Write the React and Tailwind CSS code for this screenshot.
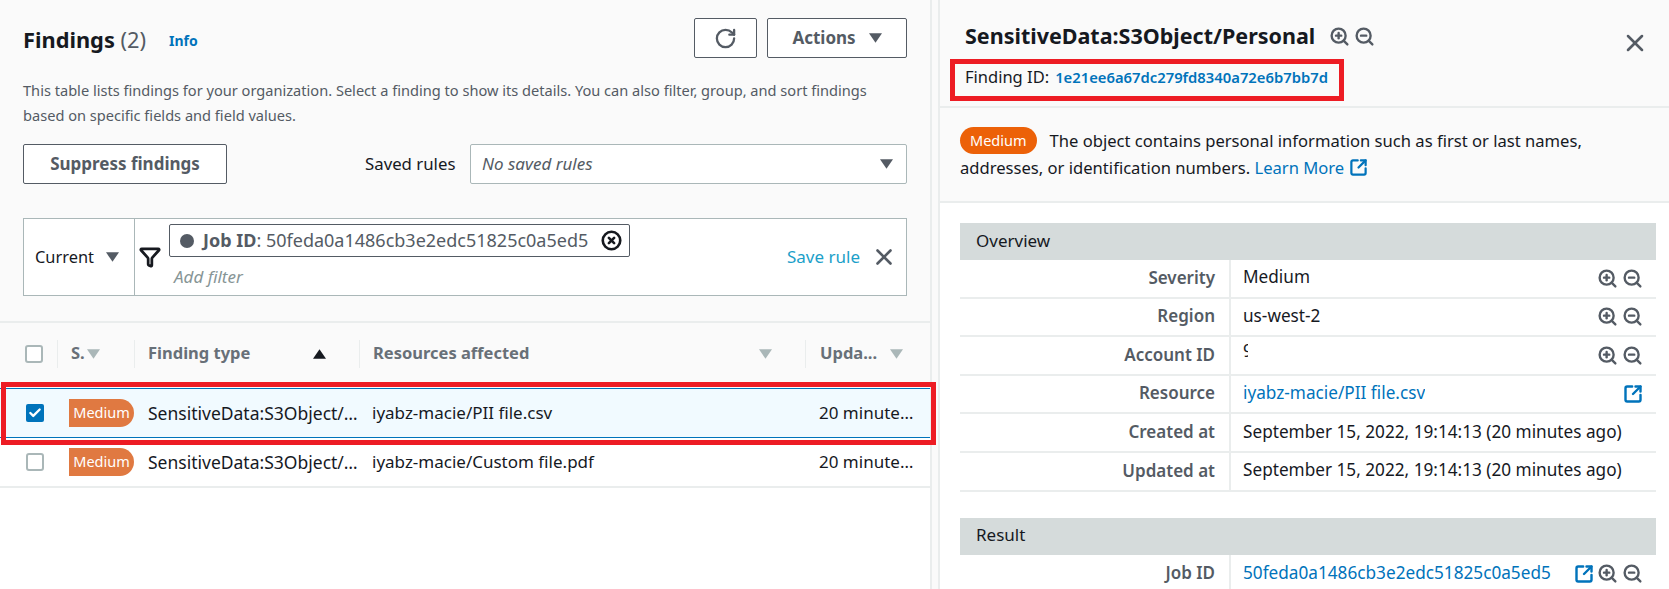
import { RotateCw, Funnel, CircleX, X, ZoomIn, ZoomOut, SquareArrowOutUpRight, Check } from "lucide-react";

const font = { fontFamily: '"Noto Sans", sans-serif' };

const Caret = ({ className }) => (
  <svg viewBox="0 0 14 10" className={className} fill="currentColor">
    <path d="M0 0h14L7 10z" />
  </svg>
);

const Zooms = () => (
  <div className="flex items-center gap-[4px] text-[#545b64]">
    <ZoomIn size={21} strokeWidth={2.7} />
    <ZoomOut size={21} strokeWidth={2.7} />
  </div>
);

const Ext = ({ size = 20 }) => (
  <SquareArrowOutUpRight size={size} strokeWidth={2.9} className="text-[#0073bb]" />
);

const Badge = ({ className }) => (
  <span className={`flex h-7 w-[65px] items-center justify-center rounded-r-full bg-[#e07941] text-[14.5px] text-white ${className}`}>
    Medium
  </span>
);

const TableRow = ({ selected, file, className }) => (
  <div className={`grid h-[50px] grid-cols-[69px_79px_224px_447px_113px] items-center text-[17px] text-[#16191f] ${className}`}>
    <div className="pl-[26px]">
      {selected ? (
        <span className="flex h-[18px] w-[18px] items-center justify-center rounded-[2px] bg-[#0073bb] text-white">
          <Check size={14} strokeWidth={4} />
        </span>
      ) : (
        <span className="block h-[18px] w-[18px] rounded-[3px] border-2 border-[#aab7b8] bg-white" />
      )}
    </div>
    <Badge />
    <div className="mr-[10px] truncate text-[17.5px]">SensitiveData:S3Object/Personal</div>
    <div className="truncate">{file}</div>
    <div className="mr-[14px] truncate">20 minutes ago</div>
  </div>
);

const DetailRow = ({ label, children, icons, border = true }) => (
  <div className={`flex h-[38.6px] items-stretch ${border ? "border-b-2 border-[#eaeded]" : ""}`}>
    <div className="flex w-[271px] shrink-0 items-center justify-end border-r-2 border-[#eaeded] pb-[2px] pr-[14px] text-[17px] font-semibold text-[#545b64]">
      {label}
    </div>
    <div className="flex min-w-0 flex-1 items-center justify-between pl-[12px] pr-[13px] text-[17.2px] text-[#16191f]">
      <div className="truncate pb-[2px]">{children}</div>
      <div className="flex items-center gap-[3px]">{icons}</div>
    </div>
  </div>
);

export default function App() {
  return (
    <div style={font} className="relative flex h-[589px] w-[1669px] overflow-hidden bg-white">
      {/* findings list */}
      <div className="w-[932px] shrink-0 border-r-2 border-[#eaeded]">
        <div className="h-[323px] border-b-2 border-[#eaeded] bg-[#fafafa] px-[23px]">
          <div className="flex h-[78px] items-start justify-between pt-[18px]">
            <div className="flex items-center pt-[4px]">
              <h1 className="text-[21.8px] leading-[36px] font-bold text-[#16191f]">
                Findings <span className="font-normal text-[#545b64]">(2)</span>
              </h1>
              <span className="ml-[23px] text-[14px] font-bold text-[#0073bb]">Info</span>
            </div>
            <div className="flex gap-[10px]">
              <button className="flex h-10 w-[63px] items-center justify-center rounded-[2px] border border-[#545b64] bg-white text-[#545b64]">
                <RotateCw size={23} strokeWidth={2.4} />
              </button>
              <button className="flex h-10 w-[140px] items-center justify-center gap-[13px] rounded-[2px] border border-[#545b64] bg-white text-[17px] font-bold text-[#545b64]">
                Actions
                <Caret className="h-[10px] w-[13px]" />
              </button>
            </div>
          </div>
          <p className="text-[14.6px] leading-[25px] text-[#545b64]">
            This table lists findings for your organization. Select a finding to show its details. You can also filter, group, and sort findings
            <br />
            based on specific fields and field values.
          </p>
          <div className="mt-[16px] flex h-10 items-center">
            <button className="h-10 w-[204px] rounded-[2px] border border-[#545b64] bg-white text-[17px] font-bold text-[#545b64]">
              Suppress findings
            </button>
            <span className="ml-[138px] w-[105px] text-[16.8px] text-[#16191f]">Saved rules</span>
            <div className="flex h-10 flex-1 items-center justify-between rounded-[2px] border border-[#aab7b8] bg-white pl-[11px] pr-[13px] text-[17px] text-[#545b64] italic">
              No saved rules
              <Caret className="h-[10px] w-[13px]" />
            </div>
          </div>
          <div className="mt-[34px] flex h-[78px] border border-[#aab7b8] bg-white">
            <div className="flex w-[111px] items-center gap-[12px] border-r border-[#aab7b8] pl-[11px] text-[16.4px] text-[#16191f]">
              Current
              <Caret className="h-[10px] w-[13px] text-[#545b64]" />
            </div>
            <div className="flex w-[30px] items-center justify-center text-[#16191f]">
              <Funnel size={22} strokeWidth={3} />
            </div>
            <div className="flex-1 pl-[4px] pt-[5px]">
              <div className="flex h-[33px] w-[461px] items-center rounded-[2px] border border-[#545b64] pl-[10px] text-[18px] text-[#545b64]">
                <span className="mr-[9px] h-[14px] w-[14px] rounded-full bg-[#545b64]" />
                <span className="font-bold">Job ID</span>: 50feda0a1486cb3e2edc51825c0a5ed5
                <CircleX size={21} strokeWidth={3} className="ml-auto mr-[7px] text-[#16191f]" />
              </div>
              <div className="mt-[9px] pl-[5px] text-[17px] leading-[22px] text-[#879596] italic">Add filter</div>
            </div>
            <div className="flex items-center gap-[11px] pr-[9px] text-[17px] text-[#1ba0c9]">
              Save rule
              <X size={26} strokeWidth={2.4} className="text-[#545b64]" />
            </div>
          </div>
        </div>

        <div className="grid h-[65px] grid-cols-[57px_77px_225px_446px_127px] items-center bg-[#fafafa] pb-[4px] text-[16.5px] font-bold text-[#687078]">
          <div className="pl-[25px]">
            <span className="block h-[18px] w-[18px] rounded-[3px] border-2 border-[#aab7b8] bg-white" />
          </div>
          <div className="flex h-7 items-center gap-[2px] border-l border-[#eaeded] pl-[13px]">
            S.
            <Caret className="h-[10px] w-[13px] text-[#aab7b8]" />
          </div>
          <div className="flex h-7 items-center justify-between border-l border-[#eaeded] pl-[13px] pr-[33px]">
            Finding type
            <Caret className="h-[10px] w-[13px] rotate-180 text-[#16191f]" />
          </div>
          <div className="flex h-7 items-center justify-between border-l border-[#eaeded] pl-[13px] pr-[33px]">
            Resources affected
            <Caret className="h-[10px] w-[13px] text-[#aab7b8]" />
          </div>
          <div className="flex h-7 items-center gap-[13px] border-l border-[#eaeded] pl-[14px]">
            Upda...
            <Caret className="h-[10px] w-[13px] text-[#aab7b8]" />
          </div>
        </div>
        <TableRow selected file="iyabz-macie/PII file.csv" className="border-y border-[#0073bb] bg-[#f1faff]" />
        <TableRow file="iyabz-macie/Custom file.pdf" className="border-b-2 border-[#eaeded] bg-white" />
      </div>

      {/* strip between the panels */}
      <div className="w-[6px] shrink-0 bg-[#fafafa]" />

      {/* finding details */}
      <div className="flex-1 border-l-2 border-[#eaeded]">
        <div className="h-[108px] border-b-2 border-[#eaeded] bg-[#fafafa] pl-[25px] pr-[20px]">
          <div className="flex items-start justify-between pt-[20px]">
            <div className="flex items-center gap-[14px]">
              <h2 className="text-[21.5px] leading-[32px] font-bold text-[#16191f]">SensitiveData:S3Object/Personal</h2>
              <Zooms />
            </div>
            <X size={28} strokeWidth={2.2} className="mt-[9px] text-[#545b64]" />
          </div>
          <div className="mt-[9px] flex items-center gap-[6px] text-[16.5px] leading-[22px] text-[#16191f]">
            Finding ID:
            <span className="text-[14.8px] font-semibold text-[#0073bb]">1e21ee6a67dc279fd8340a72e6b7bb7d</span>
          </div>
        </div>
        <div className="h-[95px] border-b-2 border-[#eaeded] bg-[#fafafa] pl-[20px] pr-2 pt-[19px] text-[16.6px] leading-[27px] text-[#16191f]">
          <span className="mr-[13px] inline-block h-[27px] rounded-full bg-[#ec6108] px-[10px] align-top text-[14.5px] leading-[27px] text-white">
            Medium
          </span>
          The object contains personal information such as first or last names,
          <br />
          addresses, or identification numbers. <span className="text-[#0073bb]">Learn More</span>{" "}
          <SquareArrowOutUpRight size={19} strokeWidth={2.8} className="inline align-[-3px] text-[#0073bb]" />
        </div>
        <div className="pl-[20px] pr-[13px] pt-[20px]">
          <div className="flex h-[37px] items-center bg-[#d5dbdb] pb-[2px] pl-4 text-[17px] text-[#16191f]">Overview</div>
          <DetailRow label="Severity" icons={<Zooms />}>Medium</DetailRow>
          <DetailRow label="Region" icons={<Zooms />}>us-west-2</DetailRow>
          <DetailRow label="Account ID" icons={<Zooms />}>
            <span className="inline-block w-[5px] overflow-hidden">9</span>
          </DetailRow>
          <DetailRow label="Resource" icons={<Ext />}>
            <span className="text-[#0073bb]">iyabz-macie/PII file.csv</span>
          </DetailRow>
          <DetailRow label="Created at">September 15, 2022, 19:14:13 (20 minutes ago)</DetailRow>
          <DetailRow label="Updated at">September 15, 2022, 19:14:13 (20 minutes ago)</DetailRow>
          <div className="mt-[26px] flex h-[37px] items-center bg-[#d5dbdb] pb-[2px] pl-4 text-[17px] text-[#16191f]">Result</div>
          <DetailRow label="Job ID" border={false} icons={<><Ext /><Zooms /></>}>
            <span className="text-[#0073bb]">50feda0a1486cb3e2edc51825c0a5ed5</span>
          </DetailRow>
        </div>
      </div>

      {/* red annotation boxes */}
      <div className="absolute left-[1px] top-[382px] h-[63px] w-[935px] border-[5px] border-[#ed1c24]" />
      <div className="absolute left-[950px] top-[59px] h-[42px] w-[394px] border-[5px] border-[#ed1c24]" />
    </div>
  );
}
